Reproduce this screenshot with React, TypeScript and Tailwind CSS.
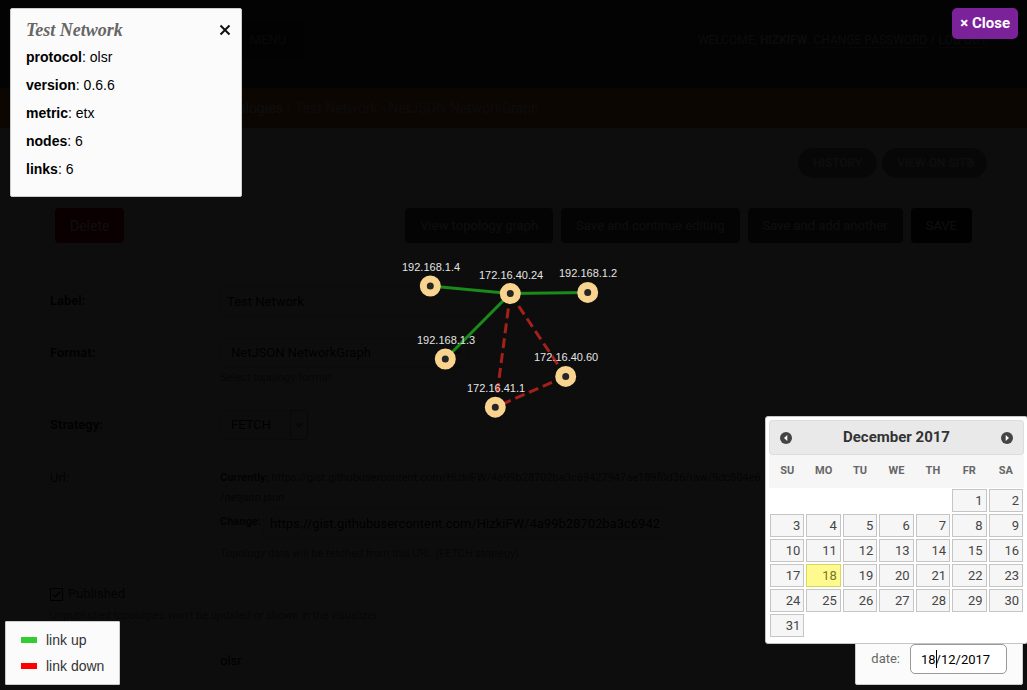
import type { ReactNode } from "react";
import { ChevronDown, ChevronRight, Menu } from "lucide-react";

type GraphNode = { id: string; x: number; y: number; lx: number; ly: number };

const nodes: GraphNode[] = [
  { id: "192.168.1.4", x: 430.3, y: 286, lx: 402, ly: 271 },
  { id: "172.16.40.24", x: 510.3, y: 293.6, lx: 479, ly: 279 },
  { id: "192.168.1.2", x: 587.7, y: 292.4, lx: 559, ly: 277 },
  { id: "192.168.1.3", x: 445.3, y: 359, lx: 417, ly: 344 },
  { id: "172.16.41.1", x: 495.3, y: 407.2, lx: 467, ly: 392 },
  { id: "172.16.40.60", x: 565.7, y: 376.4, lx: 534, ly: 361 },
];

const links = [
  { from: 1, to: 0, up: true },
  { from: 1, to: 2, up: true },
  { from: 1, to: 3, up: true },
  { from: 1, to: 4, up: false },
  { from: 1, to: 5, up: false },
  { from: 5, to: 4, up: false },
];

const info = [
  ["protocol", "olsr"],
  ["version", "0.6.6"],
  ["metric", "etx"],
  ["nodes", "6"],
  ["links", "6"],
];

const weekdays = ["SU", "MO", "TU", "WE", "TH", "FR", "SA"];
const weeks = Array.from({ length: 6 }, (_, w) =>
  Array.from({ length: 7 }, (_, d) => {
    const day = w * 7 + d - 4;
    return day >= 1 && day <= 31 ? day : null;
  }),
);

const submitClass = "h-[35px] rounded bg-[#505050] px-[15px] text-[13px] text-white";

function Field({ id, label, children }: { id: string; label: string; children: ReactNode }) {
  return (
    <div className="flex py-[11px] pl-2.5">
      <label htmlFor={id} className="w-[170px] shrink-0 pt-[5px] text-[13px] leading-5 font-bold text-[#222]">
        {label}
      </label>
      <div>{children}</div>
    </div>
  );
}

function AdminPage() {
  return (
    <div className="bg-white">
      <header className="flex h-[88px] items-center justify-between bg-[#3c3c3c] pr-10 pl-[216px]">
        <button className="mb-2 flex h-10 items-center gap-1.5 rounded bg-[#303030] pr-[18px] pl-3 text-[13px] text-[#999]">
          <Menu className="size-4" />
          MENU
        </button>
        <div className="mb-2 text-xs text-[#ccc] uppercase">
          Welcome, <strong>HizkiFW</strong>.{" "}
          <a href="#password" className="border-b border-[#777]">Change password</a> /{" "}
          <a href="#logout" className="border-b border-[#777]">Log out</a>
        </div>
      </header>
      <nav className="flex h-10 items-center gap-1 bg-[#d97025] px-10 text-sm whitespace-nowrap text-[#efc8c8]">
        <div className="flex w-[251px] shrink-0 justify-end gap-1">
          <a href="#home">Home</a> › <a href="#graph">Graph</a> ›{" "}
          <a href="#topologies" className="text-white">Topologies</a> ›
        </div>
        <span>Test Network - NetJSON NetworkGraph</span>
      </nav>
      <main className="px-10 pt-5">
        <div className="flex justify-end gap-[5px] text-xs font-medium text-white">
          <a href="#history" className="flex h-[30px] items-center rounded-full bg-[#888] px-[15px]">HISTORY</a>
          <a href="#site" className="flex h-[30px] items-center rounded-full bg-[#888] pr-2 pl-[15px]">
            VIEW ON SITE
            <ChevronRight className="-ml-2 size-3.5" strokeWidth={4} />
          </a>
        </div>
        <div className="mt-3.5 flex items-center gap-2 border-x border-b border-[#eee] px-3.5 pt-4 pb-2.5">
          <button className="mr-auto h-[35px] rounded bg-[#ba0021] px-[15px] text-sm text-white">Delete</button>
          <button className={submitClass}>View topology graph</button>
          <button className={submitClass}>Save and continue editing</button>
          <button className={submitClass}>Save and add another</button>
          <button className="h-[35px] rounded bg-[#222] px-[15px] text-[13px] text-white">SAVE</button>
        </div>
        <div className="mt-[21px] border-b border-[#eee]">
          <Field id="label" label="Label:">
            <input id="label" defaultValue="Test Network" className="h-[30px] w-[274px] rounded border border-[#ccc] px-1.5 text-[13px] text-black" />
          </Field>
          <Field id="format" label="Format:">
            <div className="relative w-[248px]">
              <select id="format" className="h-[30px] w-full appearance-none rounded border border-[#ccc] px-2.5 text-[13px] text-black">
                <option>NetJSON NetworkGraph</option>
              </select>
              <ChevronDown className="absolute top-2 right-1 size-3" />
            </div>
            <p className="text-[11px] leading-5 text-[#777]">Select topology format</p>
          </Field>
          <Field id="strategy" label="Strategy:">
            <div className="relative w-[88px]">
              <select id="strategy" className="h-[30px] w-full appearance-none rounded border border-[#ccc] px-2.5 text-[13px] text-black">
                <option>FETCH</option>
              </select>
              <span className="absolute inset-y-0 right-0 flex w-[18px] items-center justify-center rounded-r border border-[#999] bg-[#eee]">
                <ChevronDown className="size-3" />
              </span>
            </div>
          </Field>
        </div>
        <div className="flex pt-4 pl-2.5">
          <label htmlFor="url" className="w-[170px] shrink-0 text-[13px] leading-5 text-[#333]">Url:</label>
          <div className="text-[11px] leading-5 text-[#555]">
            <strong className="text-[#333]">Currently:</strong>{" "}
            <a href="#source">
              https://gist.githubusercontent.com/HizkiFW/4a99b28702ba3c69427947ae189f0d36/raw/9dc804e6
              <br />
              /netjson.json
            </a>
            <div className="flex gap-[3px]">
              <strong className="w-10 pt-1 text-[#333]">Change:</strong>
              <input id="url" defaultValue="https://gist.githubusercontent.com/HizkiFW/4a99b28702ba3c69427947ae189f0d36" className="h-[30px] w-[404px] rounded border border-[#ccc] px-1.5 text-[13px] text-black" />
            </div>
            <p className="mt-1.5 text-[#777]">Topology data will be fetched from this URL (FETCH strategy)</p>
          </div>
        </div>
        <div className="mt-5 border-b border-[#eee] pb-2 pl-2.5">
          <div className="flex items-center gap-[5px]">
            <span className="relative flex">
              <input id="published" type="checkbox" defaultChecked className="size-[13px] appearance-none border border-black" />
              <svg viewBox="0 0 13 13" className="pointer-events-none absolute inset-0 size-[13px]">
                <path d="M3 6.5 5.5 9 10.5 3.5" fill="none" stroke="#000" strokeWidth="1.2" />
              </svg>
            </span>
            <label htmlFor="published" className="text-[13px] leading-5 text-[#333]">Published</label>
          </div>
          <p className="text-[11px] leading-6 text-[#777]">Unpublished topologies won't be updated or shown in the visualizer</p>
        </div>
        <p className="pt-3.5 pb-8 pl-[180px] text-[13px] leading-5 text-black">olsr</p>
      </main>
    </div>
  );
}

function Graph() {
  return (
    <svg className="absolute inset-0 size-full" aria-label="Network topology">
      {links.map((l) => (
        <line
          key={`${l.from}-${l.to}`}
          x1={nodes[l.from].x}
          y1={nodes[l.from].y}
          x2={nodes[l.to].x}
          y2={nodes[l.to].y}
          stroke={l.up ? "#1a8a1a" : "#a52019"}
          strokeWidth="3"
          strokeDasharray={l.up ? undefined : "10 5"}
        />
      ))}
      {nodes.map((n) => (
        <g key={n.id}>
          <circle cx={n.x} cy={n.y} r="7" fill="#262626" stroke="#f8d48f" strokeWidth="7" />
          <text x={n.lx} y={n.ly} fill="#e4e4e4" className="font-['Liberation_Sans',sans-serif] text-[11px]">
            {n.id}
          </text>
        </g>
      ))}
    </svg>
  );
}

function Arrow({ flip = false }: { flip?: boolean }) {
  return (
    <svg viewBox="0 0 12 12" className="size-3">
      <circle cx="6" cy="6" r="6" fill="#444" />
      <path d={flip ? "M4.7 3v6L8 6z" : "M7.3 3v6L4 6z"} fill="#fff" />
    </svg>
  );
}

function Calendar() {
  return (
    <div className="absolute -right-px bottom-[46px] w-[263px] rounded-[3px] border border-[#c5c5c5] bg-white p-[3px] pb-[5px]">
      <div className="flex h-[35px] items-center justify-between rounded-[3px] border border-[#ddd] bg-[#e9e9e9] px-2.5">
        <button aria-label="Previous month"><Arrow /></button>
        <span className="text-[15px] font-bold text-[#333]">December 2017</span>
        <button aria-label="Next month"><Arrow flip /></button>
      </div>
      <table className="w-full table-fixed border-collapse">
        <thead>
          <tr className="h-[33px] bg-[#f6f6f6]">
            {weekdays.map((d) => (
              <th key={d} className="p-0 text-[11px] font-bold text-[#666]">{d}</th>
            ))}
          </tr>
        </thead>
        <tbody>
          {weeks.map((week, i) => (
            <tr key={i}>
              {week.map((day, j) => (
                <td key={j} className="p-px">
                  {day && (
                    <button
                      className={
                        day === 18
                          ? "block h-[23px] w-full border border-[#dad55e] bg-[#fffa90] pr-[3px] text-right text-[13px] text-[#777620]"
                          : "block h-[23px] w-full border border-[#c5c5c5] bg-[#f6f6f6] pr-[3px] text-right text-[13px] text-[#454545]"
                      }
                    >
                      {day}
                    </button>
                  )}
                </td>
              ))}
            </tr>
          ))}
        </tbody>
      </table>
    </div>
  );
}

export default function App() {
  return (
    <div className="relative h-screen overflow-hidden bg-white font-[Roboto,sans-serif]">
      <AdminPage />
      <div className="absolute inset-0 bg-black/95">
        <Graph />
        <section className="absolute top-2 left-2.5 w-[232px] rounded-[2px] border border-[#ccc] bg-[#fbfbfb] px-[15px] pt-2 pb-[13px] font-['Liberation_Sans',sans-serif] text-sm text-black">
          <div className="flex h-[26px] items-center justify-between">
            <h1 className="font-['Liberation_Serif',serif] text-lg font-bold text-[#666] italic">Test Network</h1>
            <button aria-label="Close details" className="-mr-[5px]">
              <svg viewBox="0 0 12 12" className="size-3">
                <path d="M1.5 1.5 10.5 10.5M10.5 1.5 1.5 10.5" stroke="#111" strokeWidth="2" />
              </svg>
            </button>
          </div>
          {info.map(([k, v]) => (
            <p key={k} className="leading-7">
              <strong>{k}</strong>: {v}
            </p>
          ))}
        </section>
        <button className="absolute top-2 right-[9px] h-[31px] rounded-[5px] bg-[#7b2199] px-2 text-[15px] font-bold text-white">
          × Close
        </button>
        <section className="absolute bottom-[5px] left-[5px] rounded-[1px] border border-[#ccc] bg-[#fbfbfb] px-[15px] py-[5px] font-['Liberation_Sans',sans-serif] text-sm leading-[26px] text-[#333]">
          <div className="flex items-center gap-[9px]">
            <span className="h-1.5 w-4 bg-[#3c3]" />
            link up
          </div>
          <div className="flex items-center gap-[9px]">
            <span className="h-1.5 w-4 bg-[#f00]" />
            link down
          </div>
        </section>
        <section className="absolute right-1 bottom-[5px] flex items-center gap-2.5 rounded-[2px] border border-[#ccc] bg-[#fbfbfb] px-[15px] py-2.5">
          <label htmlFor="date" className="text-[13px] text-[#666]">date:</label>
          <div className="relative">
            <input id="date" defaultValue="18/12/2017" className="block h-[30px] w-[97px] rounded-[5px] border border-[#999] bg-white pl-2.5 text-[13px] text-black" />
            <span className="absolute top-1.5 left-[26px] h-[18px] w-px bg-black" />
          </div>
        </section>
        <Calendar />
      </div>
    </div>
  );
}
